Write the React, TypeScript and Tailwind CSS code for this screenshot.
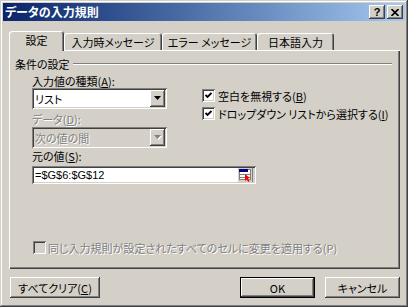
import React from "react";

const raised =
  "shadow-[inset_-1px_-1px_#404040,inset_1px_1px_#ffffff,inset_-2px_-2px_#808080,inset_2px_2px_#d4d0c8]";
const sunken =
  "shadow-[inset_1px_1px_#808080,inset_-1px_-1px_#ffffff,inset_2px_2px_#404040,inset_-2px_-2px_#d4d0c8]";
const disabledText = "text-[#808080] [text-shadow:1px_1px_0_#ffffff]";

function U({ children }: { children: React.ReactNode }) {
  return <span className="underline underline-offset-[1px] decoration-1">{children}</span>;
}

function Arrow({ disabled }: { disabled?: boolean }) {
  return (
    <svg width="8" height="5" viewBox="0 0 8 5" className="block">
      {disabled && <polygon points="1,1 8,1 4.5,5" fill="#ffffff" />}
      <polygon points="0,0 7,0 3.5,4" fill={disabled ? "#808080" : "#000000"} />
    </svg>
  );
}

function Combo({ text, disabled }: { text: string; disabled?: boolean }) {
  return (
    <div
      className={`w-[135px] h-[21px] flex items-stretch p-[2px] ${sunken} ${
        disabled ? "bg-[#d4d0c8]" : "bg-white"
      }`}
    >
      <div
        className={`flex-1 flex items-center pl-[1px] whitespace-nowrap ${
          disabled ? disabledText : "text-black"
        }`}
      >
        {text}
      </div>
      <div className={`w-[15px] bg-[#d4d0c8] flex items-center justify-center ${raised}`}>
        <Arrow disabled={disabled} />
      </div>
    </div>
  );
}

function CheckBox({ checked, disabled }: { checked?: boolean; disabled?: boolean }) {
  return (
    <div
      className={`w-[13px] h-[13px] shrink-0 flex items-center justify-center ${sunken} ${
        disabled ? "bg-[#d4d0c8]" : "bg-white"
      }`}
    >
      {checked && (
        <svg width="7" height="7" viewBox="0 0 7 7" className="block">
          <polyline
            points="0.5,3 2.5,5 6.5,1"
            fill="none"
            stroke="#000000"
            strokeWidth="1.8"
          />
        </svg>
      )}
    </div>
  );
}

function RangeIcon() {
  return (
    <svg width="16" height="14" viewBox="0 0 16 14" className="block">
      <rect x="0" y="0" width="16" height="14" fill="#d4d0c8" />
      <rect x="1.5" y="1.5" width="11" height="10" fill="#ffffff" stroke="#808080" />
      <rect x="1" y="1" width="9" height="3" fill="#000080" />
      <line x1="2" y1="6.5" x2="12" y2="6.5" stroke="#808080" />
      <line x1="2" y1="9.5" x2="12" y2="9.5" stroke="#808080" />
      <polygon points="7,6 7,13 8.6,11.4 10.4,14 11.6,13 9.8,10.4 12,10" fill="#ff0000" />
      <line x1="14.5" y1="0" x2="14.5" y2="14" stroke="#808080" />
    </svg>
  );
}

function TitleBtn({ children }: { children: React.ReactNode }) {
  return (
    <div
      className={`w-[16px] h-[14px] bg-[#d4d0c8] flex items-center justify-center ${raised}`}
    >
      {children}
    </div>
  );
}

function Tab({
  label,
  width,
  selected,
}: {
  label: string;
  width: string;
  selected?: boolean;
}) {
  return (
    <div
      className={`${width} ${
        selected ? "h-[20px] -mb-px relative z-10 pb-[2px]" : "h-[17px]"
      } bg-[#d4d0c8] rounded-t-[3px] flex items-center justify-center whitespace-nowrap shadow-[inset_1px_1px_#ffffff,inset_-1px_0_#404040,inset_-2px_0_#808080]`}
    >
      {label}
    </div>
  );
}

function Button({
  children,
  width,
  isDefault,
}: {
  children: React.ReactNode;
  width: string;
  isDefault?: boolean;
}) {
  return (
    <div
      className={`${width} h-[21px] bg-[#d4d0c8] flex items-center justify-center whitespace-nowrap ${
        isDefault
          ? "border border-black shadow-[inset_-1px_-1px_#404040,inset_1px_1px_#ffffff,inset_-2px_-2px_#808080]"
          : raised
      }`}
    >
      {children}
    </div>
  );
}

export default function App() {
  return (
    <div className="w-[408px] h-[307px] bg-[#d4d0c8] p-[3px] flex flex-col text-black text-[11px] leading-[12px] font-['Noto_Sans_CJK_JP',sans-serif] [font-feature-settings:'palt'] shadow-[inset_-1px_-1px_#404040,inset_1px_1px_#d4d0c8,inset_-2px_-2px_#808080,inset_2px_2px_#ffffff]">
      {/* Title bar */}
      <div className="h-[18px] shrink-0 flex items-center bg-linear-to-r from-[#0a246a] to-[#a6caf0] pl-[2px] pr-[2px]">
        <span className="text-white font-bold text-[12px] whitespace-nowrap">データの入力規則</span>
        <div className="ml-auto flex gap-[2px]">
          <TitleBtn>
            <span className="font-['Liberation_Sans',sans-serif] font-bold text-[11px] leading-[11px] text-black">
              ?
            </span>
          </TitleBtn>
          <TitleBtn>
            <svg width="8" height="7" viewBox="0 0 8 7" className="block">
              <path d="M0.5 0 L7.5 7 M7.5 0 L0.5 7" stroke="#000000" strokeWidth="1.6" />
            </svg>
          </TitleBtn>
        </div>
      </div>

      {/* Tabs */}
      <div className="mt-[10px] ml-[6px] h-[19px] shrink-0 flex items-end">
        <Tab label="設定" width="w-[55px]" selected />
        <Tab label="入力時メッセージ" width="w-[98px]" />
        <Tab label="エラー メッセージ" width="w-[95px]" />
        <Tab label="日本語入力" width="w-[77px]" />
      </div>

      {/* Panel */}
      <div className="ml-[6px] w-[391px] h-[219px] shrink-0 flex flex-col pl-[6px] pr-[8px] shadow-[inset_1px_1px_#ffffff,inset_-1px_-1px_#404040,inset_-2px_-2px_#808080]">
        <div className="mt-[8px] h-[12px] flex items-center">
          <span className="whitespace-nowrap">条件の設定</span>
          <div className="flex-1 ml-[3px] border-t border-t-[#808080] border-b border-b-white" />
        </div>

        <div className="pl-[17px] flex flex-col">
          <div className="flex">
            <div className="w-[135px] flex flex-col">
              <div className="mt-[5px] h-[12px] whitespace-nowrap">
                入力値の種類(<U>A</U>):
              </div>
              <div className="mt-[1px]">
                <Combo text="リスト" />
              </div>
              <div className={`mt-[4px] h-[12px] whitespace-nowrap ${disabledText}`}>
                データ(<U>D</U>):
              </div>
              <div className="mt-[2px]">
                <Combo text="次の値の間" disabled />
              </div>
            </div>
            <div className="ml-[35px] mt-[19px] flex flex-col gap-[5px]">
              <div className="h-[13px] flex items-center gap-[3px] whitespace-nowrap">
                <CheckBox checked />
                <span>
                  空白を無視する(<U>B</U>)
                </span>
              </div>
              <div className="h-[13px] flex items-center gap-[3px] whitespace-nowrap">
                <CheckBox checked />
                <span>
                  ドロップダウン リストから選択する(<U>I</U>)
                </span>
              </div>
            </div>
          </div>

          <div className="mt-[2px] h-[12px] whitespace-nowrap">
            元の値(<U>S</U>):
          </div>
          <div className={`mt-[4px] w-[224px] h-[18px] bg-white flex items-stretch p-[2px] ${sunken}`}>
            <div className="flex-1 flex items-center pl-[1px] text-[11px] font-['Liberation_Sans',sans-serif] whitespace-nowrap">
              =$G$6:$G$12
            </div>
            <div className="flex items-center">
              <RangeIcon />
            </div>
          </div>
        </div>

        <div className="mt-auto mb-[15px] ml-[18px] h-[13px] flex items-center gap-[2px] whitespace-nowrap">
          <CheckBox disabled />
          <span className={disabledText}>
            同じ入力規則が設定されたすべてのセルに変更を適用する(P)
          </span>
        </div>
      </div>

      {/* Buttons */}
      <div className="mt-[8px] ml-[7px] mr-[5px] h-[21px] shrink-0 flex">
        <Button width="w-[90px]">
          すべてクリア(<U>C</U>)
        </Button>
        <div className="flex-1" />
        <Button width="w-[75px]" isDefault>
          OK
        </Button>
        <div className="w-[10px]" />
        <Button width="w-[75px]">キャンセル</Button>
      </div>
    </div>
  );
}
